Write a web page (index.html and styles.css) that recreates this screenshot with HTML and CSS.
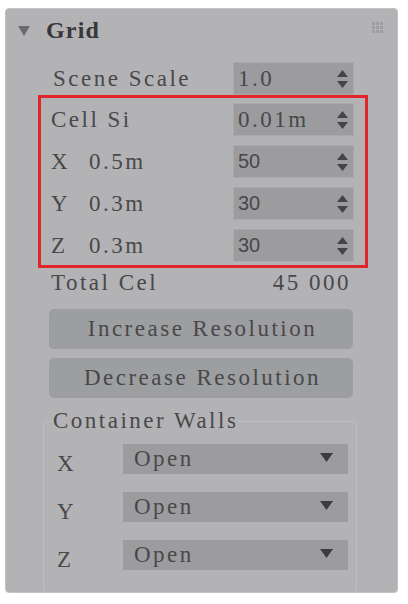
FILE: index.html
```html
<!DOCTYPE html>
<html>
<head>
<meta charset="utf-8">
<link rel="stylesheet" href="styles.css">
</head>
<body>
<div class="panel">
  <div class="header">
    <svg class="caret" width="12" height="10" viewBox="0 0 12 10"><path d="M0 0H12L6 10Z" fill="#6b6b6d"/></svg>
    <span class="title">Grid</span>
    <svg class="grip" width="11" height="11" viewBox="0 0 11 11" fill="#9e9ea0">
      <rect x="0" y="0" width="3" height="3"/><rect x="4" y="0" width="3" height="3"/><rect x="8" y="0" width="3" height="3"/>
      <rect x="0" y="4" width="3" height="3"/><rect x="4" y="4" width="3" height="3"/><rect x="8" y="4" width="3" height="3"/>
      <rect x="0" y="8" width="3" height="3"/><rect x="4" y="8" width="3" height="3"/><rect x="8" y="8" width="3" height="3"/>
    </svg>
  </div>

  <div class="row scene">
    <span class="label">Scene Scale</span>
    <div class="spin"><span class="val">1.0</span><svg class="arrows" width="11" height="18" viewBox="0 0 11 18" fill="#454547"><path d="M0 7L5.5 0L11 7Z"/><path d="M0 11H11L5.5 18Z"/></svg></div>
  </div>

  <div class="highlight">
    <div class="row">
      <span class="label">Cell Si</span>
      <div class="spin"><span class="val">0.01m</span><svg class="arrows" width="11" height="18" viewBox="0 0 11 18" fill="#454547"><path d="M0 7L5.5 0L11 7Z"/><path d="M0 11H11L5.5 18Z"/></svg></div>
    </div>
    <div class="row">
      <span class="label"><span class="axis">X</span>0.5m</span>
      <div class="spin"><span class="val sans">50</span><svg class="arrows" width="11" height="18" viewBox="0 0 11 18" fill="#454547"><path d="M0 7L5.5 0L11 7Z"/><path d="M0 11H11L5.5 18Z"/></svg></div>
    </div>
    <div class="row">
      <span class="label"><span class="axis">Y</span>0.3m</span>
      <div class="spin"><span class="val sans">30</span><svg class="arrows" width="11" height="18" viewBox="0 0 11 18" fill="#454547"><path d="M0 7L5.5 0L11 7Z"/><path d="M0 11H11L5.5 18Z"/></svg></div>
    </div>
    <div class="row">
      <span class="label"><span class="axis">Z</span>0.3m</span>
      <div class="spin"><span class="val sans">30</span><svg class="arrows" width="11" height="18" viewBox="0 0 11 18" fill="#454547"><path d="M0 7L5.5 0L11 7Z"/><path d="M0 11H11L5.5 18Z"/></svg></div>
    </div>
  </div>

  <div class="total">
    <span>Total Cel</span>
    <span>45 000</span>
  </div>

  <div class="btn first">Increase Resolution</div>
  <div class="btn">Decrease Resolution</div>

  <fieldset class="walls">
    <legend>Container Walls</legend>
    <div class="wrow">
      <span class="wlabel">X</span>
      <div class="select"><span>Open</span><svg width="13" height="9" viewBox="0 0 13 9"><path d="M0 0H13L6.5 9Z" fill="#3c3c3e"/></svg></div>
    </div>
    <div class="wrow">
      <span class="wlabel">Y</span>
      <div class="select"><span>Open</span><svg width="13" height="9" viewBox="0 0 13 9"><path d="M0 0H13L6.5 9Z" fill="#3c3c3e"/></svg></div>
    </div>
    <div class="wrow">
      <span class="wlabel">Z</span>
      <div class="select"><span>Open</span><svg width="13" height="9" viewBox="0 0 13 9"><path d="M0 0H13L6.5 9Z" fill="#3c3c3e"/></svg></div>
    </div>
  </fieldset>
</div>
</body>
</html>
```

FILE: styles.css
```css
html, body {
  margin: 0;
  padding: 0;
  background: #ffffff;
}

.panel {
  box-sizing: border-box;
  margin: 8px 0 0 5px;
  width: 393px;
  height: 585px;
  background: #b3b3b5;
  border: 1px solid #c2c2c4;
  border-radius: 4px;
  overflow: hidden;
  font-family: "Liberation Serif", "Times New Roman", serif;
  font-size: 23px;
  letter-spacing: 2.5px;
  color: #48484a;
}

.header {
  display: flex;
  align-items: center;
  height: 42px;
  padding: 0 14px 0 12px;
}

.caret {
  display: block;
  margin-top: 2px;
}

.title {
  margin-left: 16px;
  font-size: 24px;
  font-weight: bold;
  letter-spacing: 1.2px;
  color: #38383a;
  flex: 1;
}

.grip {
  display: block;
  margin-top: -6px;
}

.row {
  display: flex;
  align-items: center;
  justify-content: space-between;
  height: 33px;
}

.row + .row {
  margin-top: 9px;
}

.scene {
  margin: 11px 0 0 32px;
  width: 330px;
  box-sizing: border-box;
  padding: 0 14px 0 15px;
}

.highlight {
  margin-left: 32px;
  width: 330px;
  box-sizing: border-box;
  border: 3px solid #df262c;
  padding: 5px 11px 3px 10px;
}

.label {
  white-space: pre;
}

.axis {
  display: inline-block;
  width: 38px;
}

.spin {
  box-sizing: border-box;
  width: 121px;
  height: 33px;
  background: #9c9c9e;
  border: 1px solid #a9a9ab;
  display: flex;
  align-items: center;
  justify-content: space-between;
  padding: 0 5px 0 4px;
}

.val {
  color: #48484a;
}

.sans {
  font-family: "Liberation Sans", Arial, sans-serif;
  font-size: 20px;
  letter-spacing: 0;
}

.arrows {
  display: block;
}

.total {
  display: flex;
  justify-content: space-between;
  align-items: center;
  height: 30px;
  margin: 0 46px 0 45px;
}

.btn {
  margin: 9px 0 0 43px;
  width: 304px;
  height: 40px;
  box-sizing: border-box;
  padding-left: 3px;
  background: #9d9ea0;
  border-radius: 5px;
  display: flex;
  align-items: center;
  justify-content: center;
  color: #48484a;
}

.btn.first {
  margin-top: 11px;
}

.walls {
  box-sizing: border-box;
  margin: 11px 0 0 37px;
  width: 314px;
  height: 184px;
  padding: 11px 8px 0 0;
  border: 1px solid #c0c0c2;
  border-radius: 4px;
}

.walls legend {
  padding: 0;
  margin-left: 9px;
  line-height: 24px;
  color: #48484a;
}

.wrow {
  display: flex;
  align-items: center;
  height: 30px;
}

.wrow + .wrow {
  margin-top: 18px;
}

.wlabel {
  width: 79px;
  padding-left: 13px;
  box-sizing: border-box;
  margin-top: 10px;
}

.select {
  flex: 1;
  height: 30px;
  background: #9c9c9e;
  display: flex;
  align-items: center;
  justify-content: space-between;
  padding: 0 15px 0 11px;
}

.select svg {
  display: block;
  margin-top: -3px;
}
```
